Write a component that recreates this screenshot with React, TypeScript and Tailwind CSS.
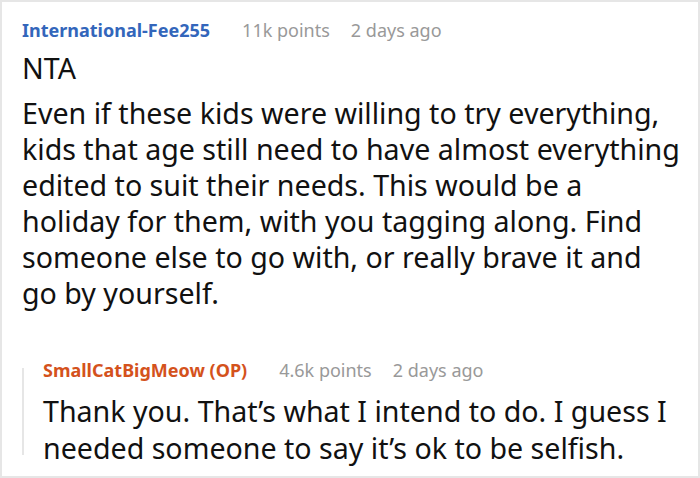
import React from 'react';

const Meta: React.FC<{ name: string; color: string; points: string }> = ({ name, color, points }) => (
  <div className="flex items-baseline gap-8 text-[18px] leading-[24px]">
    <span className={`font-bold ${color}`}>{name}</span>
    <span className="text-[#999999]">{points}</span>
    <span className="text-[#999999] ml-[-11px]">2 days ago</span>
  </div>
);

const App: React.FC = () => {
  return (
    <div
      className="w-[700px] h-[478px] bg-white border-2 border-[#e6e6e6] overflow-hidden pl-[20px] pt-[16px]"
      style={{ fontFamily: '"Noto Sans", "Open Sans", sans-serif' }}
    >
      {/* parent comment */}
      <Meta name="International-Fee255" color="text-[#3366bb]" points="11k points" />
      <div className="mt-[8px] text-[28.6px] leading-[36px] text-[#111111] whitespace-nowrap">
        <p>NTA</p>
        <p className="mt-[9px]">
          Even if these kids were willing to try everything,
          <br />
          kids that age still need to have almost everything
          <br />
          edited to suit their needs. This would be a
          <br />
          holiday for them, with you tagging along. Find
          <br />
          someone else to go with, or really brave it and
          <br />
          go by yourself.
        </p>
      </div>

      {/* reply */}
      <div className="mt-[47px] flex">
        <div className="w-[2px] bg-[#e6e6e6] mt-[10px] mb-[11px]" />
        <div className="pl-[19px]">
          <Meta name="SmallCatBigMeow (OP)" color="text-[#d4521c]" points="4.6k points" />
          <p className="mt-[10px] text-[28.6px] leading-[37px] text-[#111111] whitespace-nowrap">
            Thank you. That’s what I intend to do. I guess I
            <br />
            needed someone to say it’s ok to be selfish.
          </p>
        </div>
      </div>
    </div>
  );
};

export default App;
